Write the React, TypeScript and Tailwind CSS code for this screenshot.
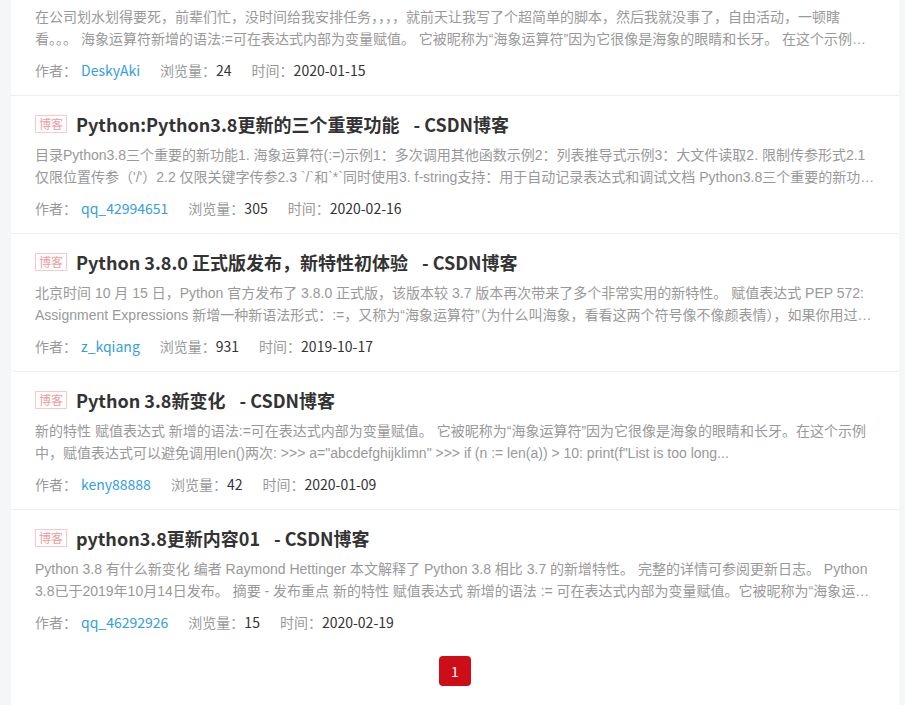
import React from "react";

type Post = {
  title?: string;
  desc: string;
  author: string;
  views: number;
  date: string;
};

const posts: Post[] = [
  {
    desc: "在公司划水划得要死，前辈们忙，没时间给我安排任务，，，，就前天让我写了个超简单的脚本，然后我就没事了，自由活动，一顿瞎看。。。 海象运算符新增的语法:=可在表达式内部为变量赋值。 它被昵称为“海象运算符”因为它很像是海象的眼睛和长牙。 在这个示例中，赋值表达式可以避免调用len()两次",
    author: "DeskyAki",
    views: 24,
    date: "2020-01-15",
  },
  {
    title: "Python:Python3.8更新的三个重要功能",
    desc: "目录Python3.8三个重要的新功能1. 海象运算符(:=)示例1：多次调用其他函数示例2：列表推导式示例3：大文件读取2. 限制传参形式2.1 仅限位置传参（'/'）2.2 仅限关键字传参2.3 `/`和`*`同时使用3. f-string支持：用于自动记录表达式和调试文档 Python3.8三个重要的新功能是什么呢",
    author: "qq_42994651",
    views: 305,
    date: "2020-02-16",
  },
  {
    title: "Python 3.8.0 正式版发布，新特性初体验",
    desc: "北京时间 10 月 15 日，Python 官方发布了 3.8.0 正式版，该版本较 3.7 版本再次带来了多个非常实用的新特性。 赋值表达式 PEP 572: Assignment Expressions 新增一种新语法形式：:=，又称为“海象运算符”（为什么叫海象，看看这两个符号像不像颜表情），如果你用过 Go 语言",
    author: "z_kqiang",
    views: 931,
    date: "2019-10-17",
  },
  {
    title: "Python 3.8新变化",
    desc: "新的特性 赋值表达式 新增的语法:=可在表达式内部为变量赋值。 它被昵称为“海象运算符”因为它很像是海象的眼睛和长牙。在这个示例中，赋值表达式可以避免调用len()两次: >>> a=\"abcdefghijklimn\" >>> if (n := len(a)) > 10: print(f\"List is too long...",
    author: "keny88888",
    views: 42,
    date: "2020-01-09",
  },
  {
    title: "python3.8更新内容01",
    desc: "Python 3.8 有什么新变化 编者 Raymond Hettinger 本文解释了 Python 3.8 相比 3.7 的新增特性。 完整的详情可参阅更新日志。 Python 3.8已于2019年10月14日发布。 摘要 - 发布重点 新的特性 赋值表达式 新增的语法 := 可在表达式内部为变量赋值。它被昵称为“海象运算符”因为它很像",
    author: "qq_46292926",
    views: 15,
    date: "2020-02-19",
  },
];

const cjk = "font-['Noto_Sans_CJK_SC',sans-serif]";

function PostCard({ post, last }: { post: Post; last: boolean }) {
  return (
    <div
      className={`px-6 pb-[15px] ${post.title ? "pt-[15px]" : "pt-[6px]"} ${
        last ? "" : "border-b border-[#eeeff1]"
      }`}
    >
      {post.title && (
        <div className="mb-[7px] flex h-[26px] items-center">
          <span
            className={`mr-[9px] flex h-[18px] w-8 shrink-0 items-center justify-center border border-[#f8c9cc] text-[12px] leading-none text-[#f29ba1] ${cjk}`}
          >
            博客
          </span>
          <span className={`text-[18px] font-bold leading-[26px] text-[#333] ${cjk}`}>
            {post.title}
            <span className="ml-[14px]">- CSDN博客</span>
          </span>
        </div>
      )}
      <p className="line-clamp-2 font-['Liberation_Sans','Noto_Sans_CJK_SC',sans-serif] text-[14px] leading-[22px] text-[#999]">
        {post.desc}
      </p>
      <div className={`mt-[10px] flex h-5 items-center text-[14px] leading-5 ${cjk}`}>
        <span className="mr-5 text-[#999]">
          作者：
          <a className="ml-1 text-[#349edf]">{post.author}</a>
        </span>
        <span className="mr-5 text-[#999]">
          浏览量：<span className="text-[#333]">{post.views}</span>
        </span>
        <span className="text-[#999]">
          时间：<span className="text-[#333]">{post.date}</span>
        </span>
      </div>
    </div>
  );
}

export default function App() {
  return (
    <div className="flex min-h-[705px] bg-[#f5f6f7] pl-[11px] pr-[6px]">
      <main className="flex-1 bg-white">
        {posts.map((p, i) => (
          <PostCard key={i} post={p} last={i === posts.length - 1} />
        ))}

        {/* 分页 */}
        <div className="mt-[9px] flex justify-center pb-5">
          <button
            className={`flex h-[30px] w-8 items-center justify-center rounded bg-[#cd0e19] text-[14px] text-white ${cjk}`}
          >
            1
          </button>
        </div>
      </main>
    </div>
  );
}
